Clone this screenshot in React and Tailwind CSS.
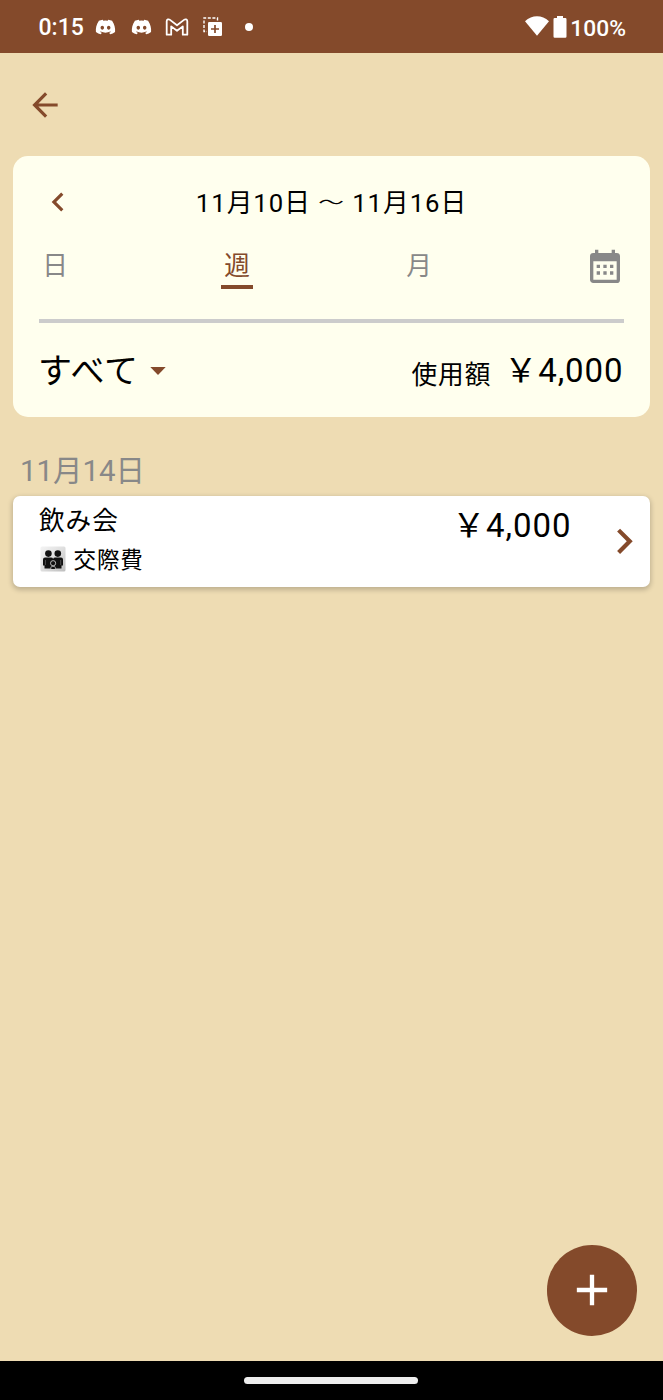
import React from "react";
import { FaDiscord } from "react-icons/fa";

function MIcon({ d, className }) {
  return (
    <svg viewBox="0 0 24 24" fill="currentColor" className={"block shrink-0 " + className}>
      <path d={d} />
    </svg>
  );
}

const ARROW_BACK = "M20 11H7.83l5.59-5.59L12 4l-8 8 8 8 1.41-1.41L7.83 13H20v-2z";
const CHEVRON_LEFT = "M15.41 7.41L14 6l-6 6 6 6 1.41-1.41L10.83 12z";
const CHEVRON_RIGHT = "M10 6L8.59 7.41 13.17 12l-4.58 4.59L10 18l6-6z";
const ADD = "M19 13h-6v6h-2v-6H5v-2h6V5h2v6h6v2z";
const CALENDAR =
  "M9,10V12H7V10H9M13,10V12H11V10H13M17,10V12H15V10H17M19,3A2,2 0 0,1 21,5V19A2,2 0 0,1 19,21H5C3.89,21 3,20.1 3,19V5A2,2 0 0,1 5,3H6V1H8V3H16V1H18V3H19M19,19V8H5V19H19M9,14V16H7V14H9M13,14V16H11V14H13M17,14V16H15V14H17Z";

function StatusBar() {
  return (
    <header className="flex h-[53px] items-start justify-between bg-[#844a2b] pl-[38px] pr-[37px] text-white">
      <div className="flex h-[54px] items-center">
        <span className="w-[57px] pl-[0.5px] pt-[2px] text-[23px] font-medium leading-[28px]">0:15</span>
        <FaDiscord className="h-[22px] w-[21px]" />
        <FaDiscord className="ml-[15px] h-[22px] w-[21px]" />
        <svg viewBox="0 0 24 18" className="ml-[13px] h-[18px] w-[24px]" fill="none" stroke="currentColor" strokeWidth="1.8" strokeLinejoin="round">
          <path d="M1.7 16.7V3.2C1.7 1.3 3.6.8 5 1.9L12 7.3 19 1.9C20.4.8 22.3 1.3 22.3 3.2V16.7H17.8V8.4L12 12.8 6.2 8.4V16.7Z" />
        </svg>
        <svg viewBox="0 0 20 20" className="ml-[14px] h-[20px] w-[20px]">
          <path d="M14.500 3.500V1H1V14.500H4" fill="none" stroke="currentColor" strokeWidth="1.400" strokeDasharray="3 1.6" />
          <rect x="5" y="5" width="14" height="14" rx="1.200" fill="currentColor" />
          <path d="M12 8v8M8 12h8" stroke="#844a2b" strokeWidth="1.700" />
        </svg>
        <span className="ml-[22px] h-[8px] w-[8px] rounded-full bg-white" />
      </div>
      <div className="flex h-[54px] items-center">
        <svg viewBox="0 0 24 20" className="mb-[3px] h-[20px] w-[24px]" fill="currentColor">
          <path d="M0 5.2C7-1.5 17-1.5 24 5.2L12 19.8Z" />
        </svg>
        <svg viewBox="0 0 14 22" className="ml-[4px] mb-[1px] h-[22px] w-[14px]" fill="currentColor">
          <path d="M4 0h6v2h2.3Q13.5 2 13.5 3.200V20.500Q13.5 21.700 12.300 21.700H1.700Q.5 21.700 .5 20.500V3.200Q.5 2 1.700 2H4Z" />
        </svg>
        <span className="ml-[3px] pt-[3px] text-[22.800px] font-medium leading-[28px]">100%</span>
      </div>
    </header>
  );
}

function FamilyIcon() {
  return (
    <svg viewBox="0 0 26 26" className="ml-[0.5px] h-[26px] w-[26px] shrink-0">
      <defs>
        <linearGradient id="tile" x1="0" y1="0" x2="1" y2="1">
          <stop offset="0" stopColor="#f4f4f4" />
          <stop offset="0.5" stopColor="#dedede" />
          <stop offset="1" stopColor="#bdbdbd" />
        </linearGradient>
      </defs>
      <rect x="0.5" y="0.5" width="25" height="25" rx="1.500" fill="url(#tile)" />
      <g fill="#111">
        <circle cx="8.400" cy="7.600" r="3.300" />
        <circle cx="17.800" cy="7.600" r="3.300" />
        <path d="M3 13.500Q3 11.600 5 11.600H11Q12.800 11.600 13.100 13 13.400 11.600 15.200 11.600H21Q23 11.600 23 13.500V19.500H21.500V22.500H4.500V19.500H3Z" />
      </g>
      <path d="M5.400 14v5M20.700 14v5" stroke="#777" strokeWidth="0.6" />
      <circle cx="13.100" cy="17.200" r="2.600" fill="#111" stroke="#ddd" strokeWidth="0.8" />
      <path d="M10.800 23v-1.200q0-1.300 1.300-1.300h2q1.300 0 1.300 1.300V23" fill="#111" stroke="#ccc" strokeWidth="0.7" />
    </svg>
  );
}

function Tab({ label, active }) {
  return (
    <button
      className={
        "h-[42px] w-[32px] border-b-4 " +
        (active ? "border-[#844a2b] text-[#844a2b]" : "border-transparent")
      }
    >
      <span className="block h-[38px]">{label}</span>
    </button>
  );
}

function SummaryCard() {
  return (
    <section className="mx-[13px] h-[260.500px] rounded-[15px] bg-[#ffffee] px-[26px]">
      <div className="grid h-[91px] grid-cols-[38px_1fr_38px] items-center">
        <MIcon d={CHEVRON_LEFT} className="h-[38px] w-[38px] text-[#844a2b]" />
        <h1 className="whitespace-nowrap pt-[2px] text-center text-[25.700px] leading-[38px] tracking-[0.97px]">
          11月10日 <span className="inline-block scale-y-60">〜</span> 11月16日
        </h1>
      </div>
      <div className="flex h-[72px] items-start justify-between text-[25.700px] leading-[38px] text-[#888]">
        <Tab label="日" />
        <Tab label="週" active />
        <Tab label="月" />
        <MIcon d={CALENDAR} className="mr-[-1px] mt-[0.500px] h-[40px] w-[40px]" />
      </div>
      <div className="h-[3.500px] bg-[#cccccc]" />
      <div className="flex h-[94px] items-center justify-between">
        <button className="ml-[-1px] flex items-center text-[34px] leading-[48px] tracking-[0.92px]">
          <span className="pt-[2px]">すべて</span>
          <svg viewBox="0 0 16 8" className="ml-[11px] mt-[2px] h-[8px] w-[16px]">
            <path d="M.3 0H15.700L8 8Z" fill="#844a2b" />
          </svg>
        </button>
        <div className="mr-[0.500px] flex items-start pt-[6px] leading-[48px] tracking-[0.92px]">
          <span className="pt-[4px] text-[25.700px]">使用額</span>
          <span className="ml-[13px] text-[33px]">￥4,000</span>
        </div>
      </div>
    </section>
  );
}

export default function App() {
  return (
    <div className="flex h-[1400px] w-[663px] flex-col overflow-hidden bg-[#eedcb3] font-['Roboto','Noto_Sans_CJK_JP',sans-serif] text-black antialiased">
      <StatusBar />
      <nav className="flex h-[103.300px] items-center pl-[26px]">
        <MIcon d={ARROW_BACK} className="h-[38px] w-[38px] text-[#844a2b]" />
      </nav>
      <SummaryCard />
      <main className="flex-1">
        <h2 className="mt-[33px] h-[46px] pl-[20px] text-[29.400px] leading-[42px] text-[#888]">11月14日</h2>
        <article className="mx-[13px] flex h-[91px] items-center rounded-[7px] bg-white pl-[26px] shadow-[0_2px_5px_1px_rgba(0,0,0,0.2)]">
          <div className="flex h-full flex-1 flex-col tracking-[0.92px]">
            <span className="mt-[5px] text-[25.700px] leading-[40px]">飲み会</span>
            <div className="-mt-px flex items-center text-[22.500px] leading-[38px]">
              <FamilyIcon />
              <span className="ml-[8px] pt-[1px]">交際費</span>
            </div>
          </div>
          <span className="mt-[6px] self-start text-[33px] leading-[48px] tracking-[0.92px]">￥4,000</span>
          <MIcon d={CHEVRON_RIGHT} className="mb-[1px] ml-[27.500px] mr-[0.500px] h-[50.600px] w-[50.600px] text-[#844a2b]" />
        </article>
      </main>
      <div className="flex justify-end pb-[25.500px] pr-[26px]">
        <button className="flex h-[90.500px] w-[90.500px] items-center justify-center rounded-full bg-[#844a2b] text-white">
          <MIcon d={ADD} className="h-[52px] w-[52px]" />
        </button>
      </div>
      <footer className="flex h-[39px] items-center justify-center bg-black">
        <span className="mr-[1px] h-[7px] w-[174px] rounded-full bg-[#eeeeee]" />
      </footer>
    </div>
  );
}
